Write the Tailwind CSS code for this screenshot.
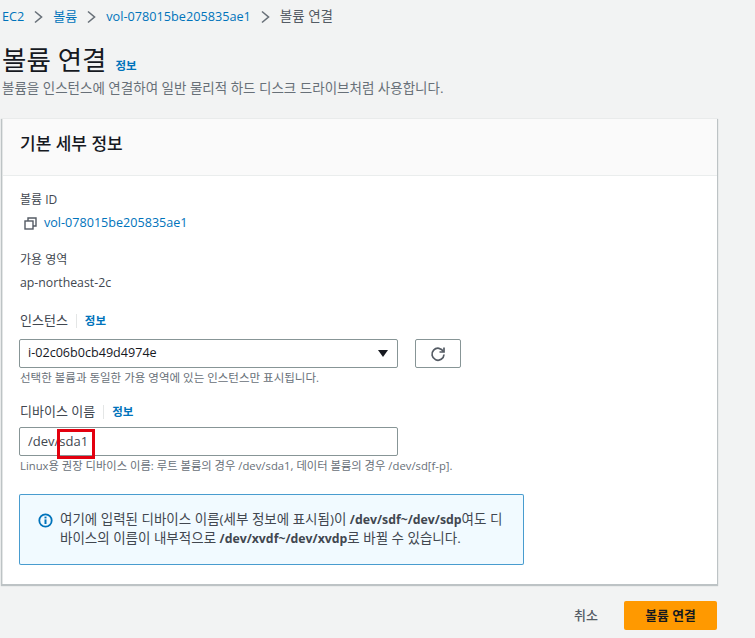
<!DOCTYPE html>
<html lang="ko">
<head>
<meta charset="utf-8">
<script src="https://cdn.jsdelivr.net/npm/@tailwindcss/browser@4"></script>
</head>
<body class="m-0 bg-[#f2f3f3]">
<div class="w-[755px] h-[638px] overflow-hidden bg-[#f2f3f3] text-[#16191f] font-['Open_Sans','Noto_Sans_CJK_KR',sans-serif] text-[12px]">
  <nav class="h-[33px] pl-[2px] flex items-center gap-[10px] text-[12.7px] text-[#545b64]">
    <span class="text-[#0073bb]">EC2</span>
    <svg class="w-[9px] h-[14px]" viewBox="0 0 9 14" fill="none" stroke="#687078" stroke-width="1.6"><path d="M1 1.5 7.5 7 1 12.5"/></svg>
    <span class="text-[#0073bb] text-[13px]">볼륨</span>
    <svg class="w-[9px] h-[14px]" viewBox="0 0 9 14" fill="none" stroke="#687078" stroke-width="1.6"><path d="M1 1.5 7.5 7 1 12.5"/></svg>
    <span class="text-[#0073bb]">vol-078015be205835ae1</span>
    <svg class="w-[9px] h-[14px]" viewBox="0 0 9 14" fill="none" stroke="#687078" stroke-width="1.6"><path d="M1 1.5 7.5 7 1 12.5"/></svg>
    <span class="text-[13.5px]">볼륨 연결</span>
  </nav>
  <header class="pl-[2px] h-[86px]">
    <div class="flex items-end gap-[9px] h-[46px]">
      <h1 class="text-[26.5px] leading-[38px] font-normal">볼륨 연결</h1>
      <a class="text-[11.5px] font-bold leading-[20px] pb-[3px] text-[#0073bb]">정보</a>
    </div>
    <p class="text-[13.5px] leading-[18px] text-[#687078]">볼륨을 인스턴스에 연결하여 일반 물리적 하드 디스크 드라이브처럼 사용합니다.</p>
  </header>
  <section class="ml-[2px] w-[715px] h-[465px] bg-white border-l border-[#e4e6e6] shadow-[0_1px_1px_1px_rgba(0,28,36,0.22)]">
    <div class="h-[57px] pl-[17px] pb-[7px] flex items-center bg-[#fafafa] border-b border-[#eaeded] text-[17px] font-medium">기본 세부 정보</div>
    <div class="px-[16px] pt-[15px]">
      <div class="pl-px h-[18px] leading-[18px] text-[12px] text-[#414750]">볼륨 ID</div>
      <div class="h-[18px] mt-[5px] flex items-center gap-[7px] text-[#0073bb] text-[12.6px] pl-[5px]">
        <svg class="w-[13px] h-[13px]" viewBox="0 0 13 13" fill="none" stroke="#545b64" stroke-width="1.4"><rect x="1" y="4" width="8" height="8"/><path d="M4 4V1h8v8H9"/></svg>
        <span>vol-078015be205835ae1</span>
      </div>
      <div class="pl-px h-[18px] leading-[18px] mt-[19px] text-[#414750]">가용 영역</div>
      <div class="pl-px h-[18px] leading-[18px] mt-[5px] text-[12.3px] text-[#414750]">ap-northeast-2c</div>
      <div class="pl-px h-[18px] mt-[20px] flex items-center text-[13px] text-[#414750]">
        <span>인스턴스</span>
        <span class="w-px h-[14px] bg-[#e4e6e6] mx-[8px]"></span>
        <span class="text-[11.5px] font-bold text-[#0073bb]">정보</span>
      </div>
      <div class="mt-[9px] flex gap-[17px]">
        <div class="w-[379px] h-[29px] border border-[#879596] rounded-[2px] flex items-center justify-between pl-[8px] pr-[9px] text-[12.6px] text-[#16191f]">
          <span>i-02c06b0cb49d4974e</span>
          <svg class="w-[10px] h-[7px]" viewBox="0 0 10 7" fill="#16191f"><path d="M0 0h10L5 7z"/></svg>
        </div>
        <div class="w-[46px] h-[29px] border border-[#879596] rounded-[2px] flex items-center justify-center">
          <svg class="w-[16px] h-[16px]" viewBox="0 0 16 16" fill="none" stroke="#545b64" stroke-width="1.7"><path d="M14 1.5V6H9.5"/><path d="M13.4 5.6A6 6 0 1 0 14 8.5"/></svg>
        </div>
      </div>
      <div class="pl-px h-[14px] leading-[14px] mt-[3px] text-[11.5px] text-[#687078]">선택한 볼륨과 동일한 가용 영역에 있는 인스턴스만 표시됩니다.</div>
      <div class="pl-px h-[18px] mt-[18px] flex items-center text-[13px] text-[#414750]">
        <span>디바이스 이름</span>
        <span class="w-px h-[14px] bg-[#e4e6e6] mx-[8px]"></span>
        <span class="text-[11.5px] font-bold text-[#0073bb]">정보</span>
      </div>
      <div class="relative mt-[6px] w-[379px] h-[29px] border border-[#879596] rounded-[2px] flex items-center pl-[8px] text-[13px] text-[#414750]">
        <span>/dev/sda1</span>
        <div class="absolute left-[37px] top-[1px] w-[38px] h-[30px] border-[3px] border-[#e3000f]"></div>
      </div>
      <div class="pl-px h-[14px] leading-[14px] mt-[3px] text-[11.3px] text-[#687078]">Linux용 권장 디바이스 이름: 루트 볼륨의 경우 /dev/sda1, 데이터 볼륨의 경우 /dev/sd[f-p].</div>
      <div class="mt-[21px] w-[505px] h-[71px] border border-[#0073bb]/70 rounded-[2px] bg-[#f1faff] pl-[18px] pr-[8px] pb-[2px] flex items-center gap-[7px] text-[#414750] text-[13.5px] leading-[19px]">
        <svg class="w-[15px] h-[15px] shrink-0 self-start mt-[18px]" viewBox="0 0 15 15" fill="none"><circle cx="7.5" cy="7.5" r="6.2" stroke="#0073bb" stroke-width="1.8"/><rect x="6.5" y="6.4" width="2" height="4.6" fill="#0073bb"/><rect x="6.5" y="3.6" width="2" height="1.8" fill="#0073bb"/></svg>
        <p class="whitespace-nowrap">여기에 입력된 디바이스 이름(세부 정보에 표시됨)이 <b class="font-bold text-[12.3px]">/dev/sdf~/dev/sdp</b>여도 디<br>바이스의 이름이 내부적으로 <b class="font-bold text-[12.3px]">/dev/xvdf~/dev/xvdp</b>로 바뀔 수 있습니다.</p>
      </div>
    </div>
  </section>
  <footer class="ml-[2px] w-[715px] mt-[17px] flex items-center justify-end gap-[26px]">
    <span class="text-[#545b64] text-[13px] font-medium">취소</span>
    <span class="w-[93px] h-[29px] flex items-center justify-center rounded-[2px] bg-[#ff9900] text-[#16191f] text-[12.8px] font-bold">볼륨 연결</span>
  </footer>
</div>
</body>
</html>
